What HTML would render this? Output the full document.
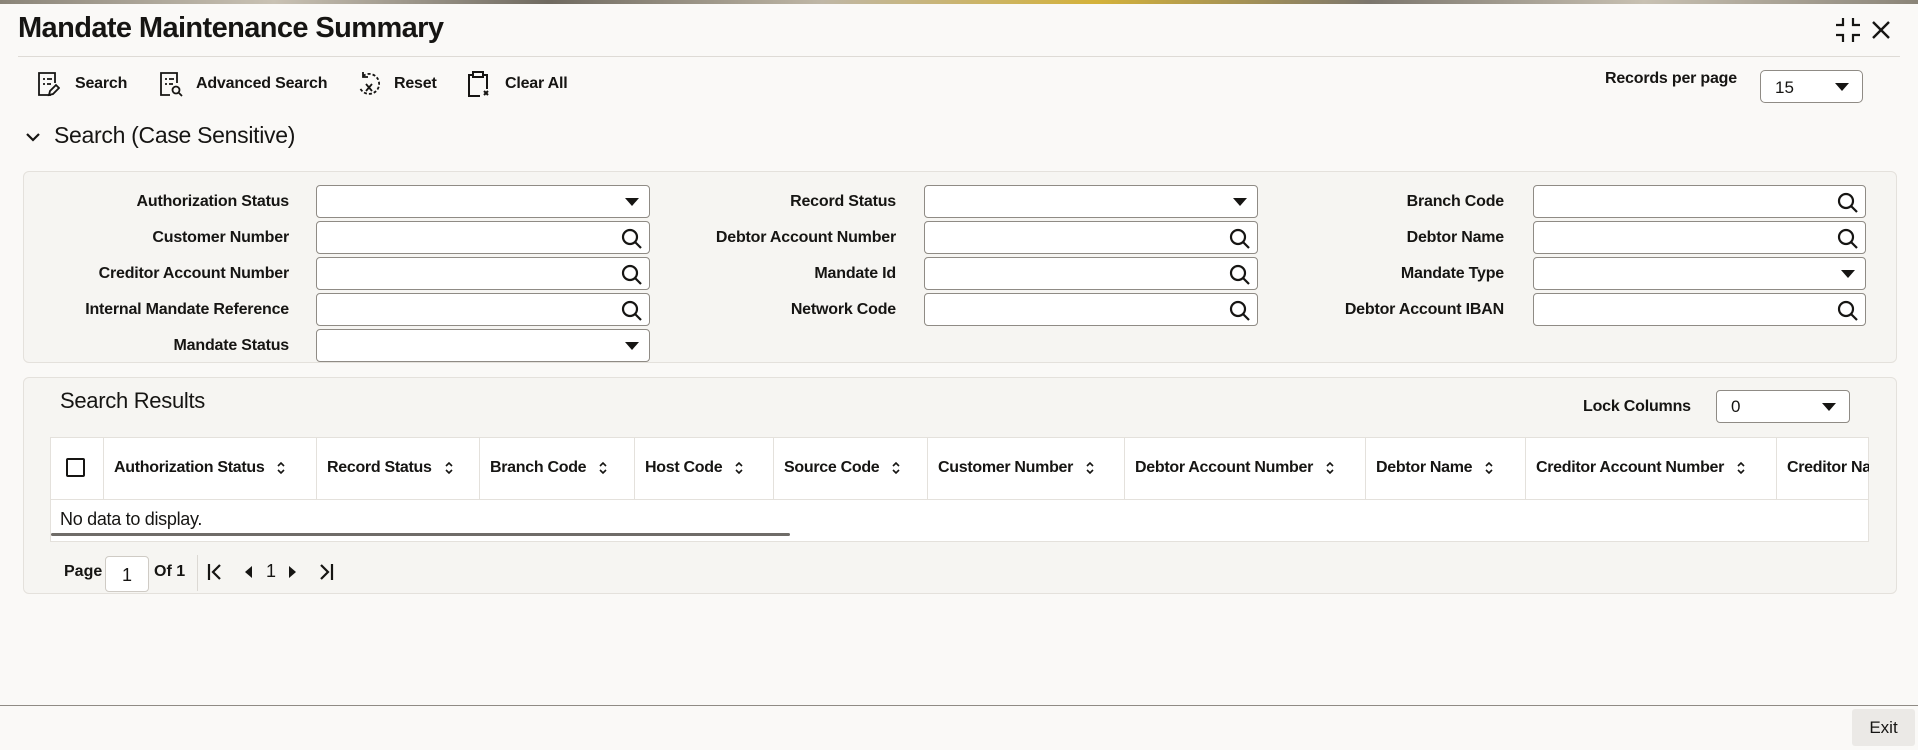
<!DOCTYPE html>
<html><head><meta charset="utf-8"><style>
*{box-sizing:border-box;margin:0;padding:0}
body{width:1918px;height:750px;overflow:hidden;background:#faf9f7;font-family:"Liberation Sans",sans-serif;color:#161513;position:relative}
.a{position:absolute}
.top{left:0;top:0;width:1918px;height:4px;background:linear-gradient(90deg,#8a8478,#c9c2b4,#6f6a60,#bfb7a6,#d4b23a,#7b766d,#c8c1b2,#8a8478)}
.title{left:18px;top:12px;font-size:29px;font-weight:bold;letter-spacing:-0.6px}
.sep{left:18px;top:56px;width:1882px;height:1px;background:#dedbd6}
.tb{top:72px;font-size:16px;font-weight:bold;line-height:24px;letter-spacing:-0.2px}
.panel{background:#f6f5f2;border:1px solid #e4e1dc;border-radius:6px}
.lbl{font-size:16px;font-weight:bold;text-align:right;width:300px;line-height:33px;letter-spacing:-0.2px}
.inp{height:33px;background:#fff;border:1px solid #8f8b85;border-radius:4px}
.inp svg{position:absolute;right:6px;top:6px}
.dd{position:absolute;right:10px;top:12px;width:0;height:0;border-left:7px solid transparent;border-right:7px solid transparent;border-top:8px solid #161513}
.hc{top:437px;height:62px;line-height:62px;font-size:16px;font-weight:bold;padding-left:10px;border-left:1px solid #e4e1dc;white-space:nowrap;overflow:hidden;letter-spacing:-0.3px}
.sort{display:inline-block;margin-left:12px;vertical-align:middle}
</style></head><body>
<div class="a top"></div>
<div class="a title">Mandate Maintenance Summary</div>
<svg class="a" style="left:1834px;top:16px" width="28" height="28" viewBox="0 0 28 28" fill="none" stroke="#161513" stroke-width="2.2"><path d="M9 2v7H2M19 2v7h7M9 26v-7H2M19 26v-7h7"/></svg>
<svg class="a" style="left:1870px;top:19px" width="22" height="22" viewBox="0 0 22 22" stroke="#161513" stroke-width="2.4"><path d="M3 3l16 16M19 3L3 19"/></svg>
<div class="a sep"></div>

<svg class="a" style="left:36px;top:71px" width="24" height="26" viewBox="0 0 24 26" fill="none" stroke="#161513" stroke-width="1.8"><path d="M15 24H3V2h16v10"/><path d="M7 8h2M11 8h5M7 13h2M11 13h4"/><path d="M13 24l1-4 6-6 3 3-6 6z"/></svg>
<div class="a tb" style="left:75px">Search</div>
<svg class="a" style="left:158px;top:71px" width="26" height="26" viewBox="0 0 26 26" fill="none" stroke="#161513" stroke-width="1.8"><path d="M12 24H3V2h16v10"/><path d="M7 8h2M11 8h5M7 13h2M11 13h4"/><circle cx="18" cy="19" r="3.5"/><path d="M21 22l3 3"/></svg>
<div class="a tb" style="left:196px">Advanced Search</div>
<svg class="a" style="left:355px;top:70px" width="28" height="28" viewBox="0 0 28 28" fill="none" stroke="#161513" stroke-width="1.8"><path d="M8 6a10 10 0 1 1-3 12" stroke-dasharray="3 2"/><path d="M8 2v5h5"/><path d="M11 14l6 7M17 14l-6 7"/></svg>
<div class="a tb" style="left:394px">Reset</div>
<svg class="a" style="left:467px;top:70px" width="24" height="28" viewBox="0 0 24 28" fill="none" stroke="#161513" stroke-width="2"><path d="M13 26H2V5h4M16 5h4v14"/><rect x="6" y="2" width="10" height="5"/><path d="M17 21l4 4M21 21l-4 4"/></svg>
<div class="a tb" style="left:505px">Clear All</div>

<div class="a" style="left:1605px;top:70px;font-size:16px;font-weight:bold;letter-spacing:-0.2px">Records per page</div>
<div class="a inp" style="left:1760px;top:70px;width:103px;border-radius:5px"><span class="a" style="left:14px;top:7px;font-size:17px">15</span><span class="dd" style="right:13px"></span></div>

<svg class="a" style="left:25px;top:131px" width="16" height="12" viewBox="0 0 16 12" fill="none" stroke="#161513" stroke-width="2.2"><path d="M2 3l6 6 6-6"/></svg>
<div class="a" style="left:54px;top:122px;font-size:23px;letter-spacing:-0.3px">Search (Case Sensitive)</div>

<div class="a panel" style="left:23px;top:171px;width:1874px;height:192px"></div>
<div class="a lbl" style="left:-11px;top:185px">Authorization Status</div>
<div class="a lbl" style="left:-11px;top:221px">Customer Number</div>
<div class="a lbl" style="left:-11px;top:257px">Creditor Account Number</div>
<div class="a lbl" style="left:-11px;top:293px">Internal Mandate Reference</div>
<div class="a lbl" style="left:-11px;top:329px">Mandate Status</div>
<div class="a lbl" style="left:596px;top:185px">Record Status</div>
<div class="a lbl" style="left:596px;top:221px">Debtor Account Number</div>
<div class="a lbl" style="left:596px;top:257px">Mandate Id</div>
<div class="a lbl" style="left:596px;top:293px">Network Code</div>
<div class="a lbl" style="left:1204px;top:185px">Branch Code</div>
<div class="a lbl" style="left:1204px;top:221px">Debtor Name</div>
<div class="a lbl" style="left:1204px;top:257px">Mandate Type</div>
<div class="a lbl" style="left:1204px;top:293px">Debtor Account IBAN</div>

<div class="a inp" style="left:316px;top:185px;width:334px"><span class="dd"></span></div>
<div class="a inp" style="left:316px;top:221px;width:334px"><svg width="22" height="22" viewBox="0 0 22 22" fill="none" stroke="#161513" stroke-width="2.2"><circle cx="9" cy="9" r="7"/><path d="M14 14l6 6"/></svg></div>
<div class="a inp" style="left:316px;top:257px;width:334px"><svg width="22" height="22" viewBox="0 0 22 22" fill="none" stroke="#161513" stroke-width="2.2"><circle cx="9" cy="9" r="7"/><path d="M14 14l6 6"/></svg></div>
<div class="a inp" style="left:316px;top:293px;width:334px"><svg width="22" height="22" viewBox="0 0 22 22" fill="none" stroke="#161513" stroke-width="2.2"><circle cx="9" cy="9" r="7"/><path d="M14 14l6 6"/></svg></div>
<div class="a inp" style="left:316px;top:329px;width:334px"><span class="dd"></span></div>

<div class="a inp" style="left:924px;top:185px;width:334px"><span class="dd"></span></div>
<div class="a inp" style="left:924px;top:221px;width:334px"><svg width="22" height="22" viewBox="0 0 22 22" fill="none" stroke="#161513" stroke-width="2.2"><circle cx="9" cy="9" r="7"/><path d="M14 14l6 6"/></svg></div>
<div class="a inp" style="left:924px;top:257px;width:334px"><svg width="22" height="22" viewBox="0 0 22 22" fill="none" stroke="#161513" stroke-width="2.2"><circle cx="9" cy="9" r="7"/><path d="M14 14l6 6"/></svg></div>
<div class="a inp" style="left:924px;top:293px;width:334px"><svg width="22" height="22" viewBox="0 0 22 22" fill="none" stroke="#161513" stroke-width="2.2"><circle cx="9" cy="9" r="7"/><path d="M14 14l6 6"/></svg></div>

<div class="a inp" style="left:1533px;top:185px;width:333px"><svg width="22" height="22" viewBox="0 0 22 22" fill="none" stroke="#161513" stroke-width="2.2"><circle cx="9" cy="9" r="7"/><path d="M14 14l6 6"/></svg></div>
<div class="a inp" style="left:1533px;top:221px;width:333px"><svg width="22" height="22" viewBox="0 0 22 22" fill="none" stroke="#161513" stroke-width="2.2"><circle cx="9" cy="9" r="7"/><path d="M14 14l6 6"/></svg></div>
<div class="a inp" style="left:1533px;top:257px;width:333px"><span class="dd"></span></div>
<div class="a inp" style="left:1533px;top:293px;width:333px"><svg width="22" height="22" viewBox="0 0 22 22" fill="none" stroke="#161513" stroke-width="2.2"><circle cx="9" cy="9" r="7"/><path d="M14 14l6 6"/></svg></div>

<div class="a panel" style="left:23px;top:377px;width:1874px;height:217px"></div>
<div class="a" style="left:60px;top:388px;font-size:22px;letter-spacing:-0.3px">Search Results</div>
<div class="a" style="left:1583px;top:398px;font-size:16px;font-weight:bold;letter-spacing:-0.2px">Lock Columns</div>
<div class="a inp" style="left:1716px;top:390px;width:134px"><span class="a" style="left:14px;top:6px;font-size:17px">0</span><span class="dd" style="right:13px"></span></div>

<div class="a" style="left:50px;top:437px;width:1819px;height:105px;background:#fff;border:1px solid #e4e1dc"></div>
<div class="a" style="left:51px;top:499px;width:1817px;height:1px;background:#e4e1dc"></div>
<div class="a" style="left:66px;top:458px;width:19px;height:19px;border:2px solid #161513;border-radius:2px"></div>
<div class="a hc" style="left:103px;width:213px">Authorization Status<svg class="sort" width="10" height="14" viewBox="0 0 10 14" fill="none" stroke="#161513" stroke-width="1.6"><path d="M2 5l3-3 3 3M2 9l3 3 3-3"/></svg></div>
<div class="a hc" style="left:316px;width:163px">Record Status<svg class="sort" width="10" height="14" viewBox="0 0 10 14" fill="none" stroke="#161513" stroke-width="1.6"><path d="M2 5l3-3 3 3M2 9l3 3 3-3"/></svg></div>
<div class="a hc" style="left:479px;width:155px">Branch Code<svg class="sort" width="10" height="14" viewBox="0 0 10 14" fill="none" stroke="#161513" stroke-width="1.6"><path d="M2 5l3-3 3 3M2 9l3 3 3-3"/></svg></div>
<div class="a hc" style="left:634px;width:139px">Host Code<svg class="sort" width="10" height="14" viewBox="0 0 10 14" fill="none" stroke="#161513" stroke-width="1.6"><path d="M2 5l3-3 3 3M2 9l3 3 3-3"/></svg></div>
<div class="a hc" style="left:773px;width:154px">Source Code<svg class="sort" width="10" height="14" viewBox="0 0 10 14" fill="none" stroke="#161513" stroke-width="1.6"><path d="M2 5l3-3 3 3M2 9l3 3 3-3"/></svg></div>
<div class="a hc" style="left:927px;width:197px">Customer Number<svg class="sort" width="10" height="14" viewBox="0 0 10 14" fill="none" stroke="#161513" stroke-width="1.6"><path d="M2 5l3-3 3 3M2 9l3 3 3-3"/></svg></div>
<div class="a hc" style="left:1124px;width:241px">Debtor Account Number<svg class="sort" width="10" height="14" viewBox="0 0 10 14" fill="none" stroke="#161513" stroke-width="1.6"><path d="M2 5l3-3 3 3M2 9l3 3 3-3"/></svg></div>
<div class="a hc" style="left:1365px;width:160px">Debtor Name<svg class="sort" width="10" height="14" viewBox="0 0 10 14" fill="none" stroke="#161513" stroke-width="1.6"><path d="M2 5l3-3 3 3M2 9l3 3 3-3"/></svg></div>
<div class="a hc" style="left:1525px;width:251px">Creditor Account Number<svg class="sort" width="10" height="14" viewBox="0 0 10 14" fill="none" stroke="#161513" stroke-width="1.6"><path d="M2 5l3-3 3 3M2 9l3 3 3-3"/></svg></div>
<div class="a hc" style="left:1776px;width:93px">Creditor Name</div>
<div class="a" style="left:60px;top:509px;font-size:18px;letter-spacing:-0.3px">No data to display.</div>
<div class="a" style="left:51px;top:533px;width:739px;height:3px;background:#6f6c68;border-radius:2px"></div>

<div class="a" style="left:64px;top:563px;font-size:16px;font-weight:bold">Page</div>
<div class="a inp" style="left:105px;top:556px;width:44px;height:36px;border-color:#cfcbc5"><span class="a" style="left:16px;top:8px;font-size:18px">1</span></div>
<div class="a" style="left:154px;top:563px;font-size:16px;font-weight:bold">Of 1</div>
<div class="a" style="left:197px;top:555px;width:1px;height:36px;background:#dcd9d4"></div>
<svg class="a" style="left:207px;top:563px" width="16" height="18" viewBox="0 0 16 18" fill="none" stroke="#161513" stroke-width="2.2"><path d="M2 1v16M13 2L6 9l7 7"/></svg>
<svg class="a" style="left:245px;top:566px" width="8" height="12" viewBox="0 0 8 12"><path d="M7 0v12L0 6z" fill="#161513"/></svg>
<div class="a" style="left:266px;top:561px;font-size:18px">1</div>
<svg class="a" style="left:288px;top:566px" width="8" height="12" viewBox="0 0 8 12"><path d="M1 0v12l7-6z" fill="#161513"/></svg>
<svg class="a" style="left:318px;top:563px" width="16" height="18" viewBox="0 0 16 18" fill="none" stroke="#161513" stroke-width="2.2"><path d="M14 1v16M3 2l7 7-7 7"/></svg>

<div class="a" style="left:0;top:705px;width:1918px;height:1px;background:#8f8b85"></div>
<div class="a" style="left:1852px;top:709px;width:63px;height:37px;background:#ebe9e6;border-radius:3px;font-size:17px;line-height:37px;text-align:center">Exit</div>
</body></html>
